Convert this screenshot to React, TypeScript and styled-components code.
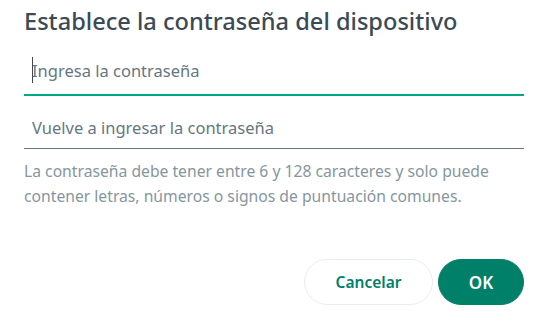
import styled, { createGlobalStyle } from "styled-components";

const GlobalStyle = createGlobalStyle`
  html, body {
    margin: 0;
    padding: 0;
    background: #ffffff;
    overflow: hidden;
  }
  body {
    font-family: "Noto Sans", "Open Sans", sans-serif;
  }
`;

const Dialog = styled.div`
  width: 537px;
  height: 311px;
  box-sizing: border-box;
  padding: 2px 13px 0 24px;
  display: flex;
  flex-direction: column;
`;

const Title = styled.h1`
  margin: 0;
  font-size: 23.6px;
  line-height: 38px;
  font-weight: 500;
  color: #3b4a54;
`;

const Fields = styled.div`
  margin-top: 16px;
  display: flex;
  flex-direction: column;
`;

const Field = styled.div<{ $active?: boolean }>`
  position: relative;
  height: ${(p) => (p.$active ? "38px" : "52px")};
  display: flex;
  align-items: ${(p) => (p.$active ? "flex-start" : "flex-end")};
  border-bottom: ${(p) => (p.$active ? "2px solid #00a884" : "1px solid #667781")};
`;

const Input = styled.input`
  width: 100%;
  border: none;
  outline: none;
  background: transparent;
  padding: 0 0 0 8px;
  height: 28px;
  margin-bottom: 7px;
  font-family: "Noto Sans", "Open Sans", sans-serif;
  font-size: 16.5px;
  color: #3b4a54;
  caret-color: transparent;

  &::placeholder {
    color: #667781;
    opacity: 1;
  }
`;

const Caret = styled.span`
  position: absolute;
  left: 8px;
  top: 1px;
  width: 1px;
  height: 26px;
  background: #3b4a54;
`;

const Help = styled.p`
  margin: 10px 0 0;
  font-size: 15.7px;
  line-height: 25px;
  color: #8696a0;
`;

const Actions = styled.div`
  margin-top: auto;
  margin-bottom: 6px;
  display: flex;
  justify-content: flex-end;
  gap: 5px;
`;

const Button = styled.button<{ $primary?: boolean }>`
  height: 46px;
  padding: 0 20px;
  border-radius: 23px;
  font-family: "Noto Sans", "Open Sans", sans-serif;
  font-size: ${(p) => (p.$primary ? "17px" : "15.5px")};
  font-weight: 600;
  cursor: pointer;
  border: 1px solid ${(p) => (p.$primary ? "#008069" : "#e9edef")};
  background: ${(p) => (p.$primary ? "#008069" : "#ffffff")};
  color: ${(p) => (p.$primary ? "#ffffff" : "#008069")};
  min-width: ${(p) => (p.$primary ? "86px" : "129px")};
`;

export default function App() {
  return (
    <>
      <GlobalStyle />
      <Dialog>
        <Title>Establece la contraseña del dispositivo</Title>
        <Fields>
          <Field $active>
            <Input type="password" placeholder="Ingresa la contraseña" />
            <Caret />
          </Field>
          <Field>
            <Input type="password" placeholder="Vuelve a ingresar la contraseña" />
          </Field>
        </Fields>
        <Help>
          La contraseña debe tener entre 6 y 128 caracteres y solo puede
          contener letras, números o signos de puntuación comunes.
        </Help>
        <Actions>
          <Button>Cancelar</Button>
          <Button $primary>OK</Button>
        </Actions>
      </Dialog>
    </>
  );
}
